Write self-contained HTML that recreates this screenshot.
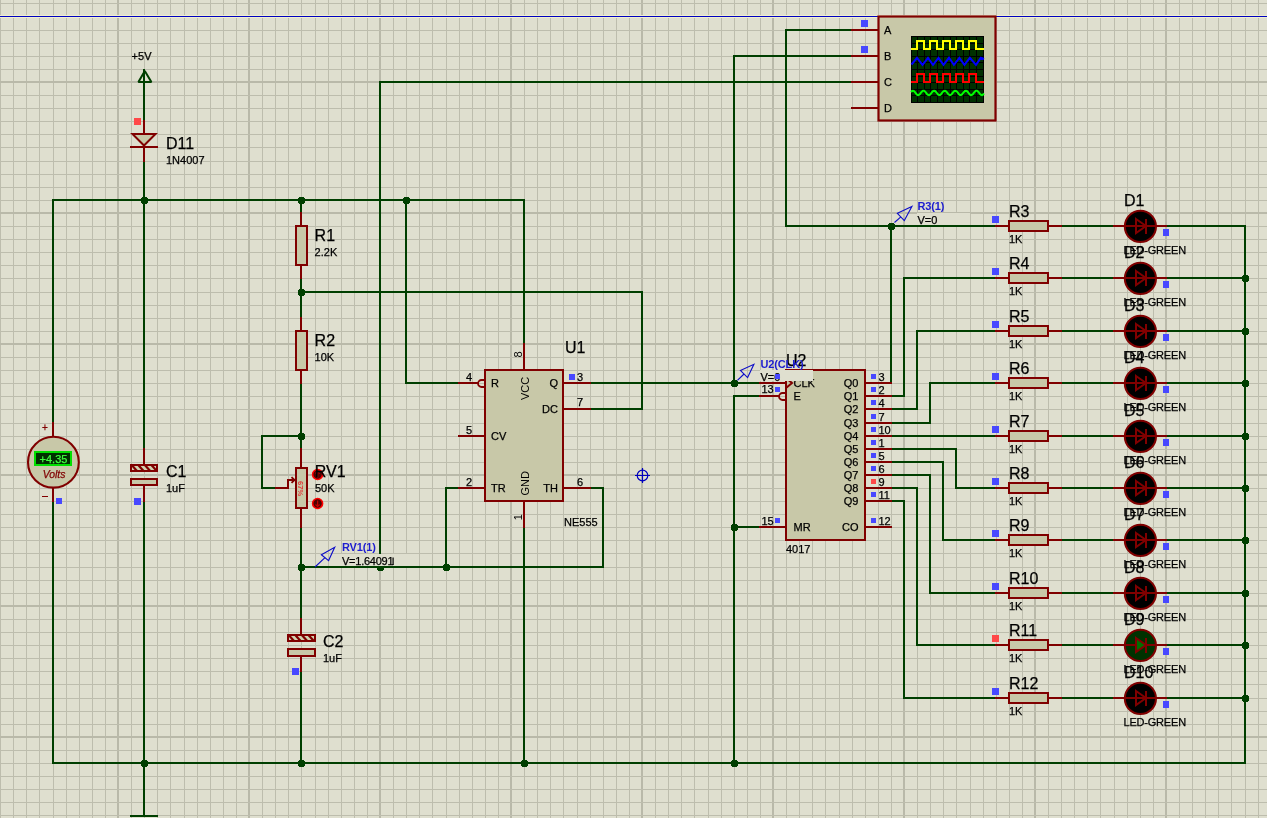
<!DOCTYPE html><html><head><meta charset="utf-8"><style>html,body{margin:0;padding:0;overflow:hidden;background:#dfdfcf}svg{display:block;will-change:transform;font-family:"Liberation Sans",sans-serif}</style></head><body><svg width="1267" height="818" viewBox="0 0 1267 818" font-family="Liberation Sans, sans-serif"><rect width="1267" height="818" fill="#dfdfcf"/><g shape-rendering="crispEdges"><rect x="0" y="0" width="1" height="818" fill="#bdbdad"/><rect x="13" y="0" width="1" height="818" fill="#bdbdad"/><rect x="26" y="0" width="1" height="818" fill="#bdbdad"/><rect x="39" y="0" width="1" height="818" fill="#bdbdad"/><rect x="53" y="0" width="1" height="818" fill="#bdbdad"/><rect x="66" y="0" width="1" height="818" fill="#bdbdad"/><rect x="79" y="0" width="1" height="818" fill="#bdbdad"/><rect x="92" y="0" width="1" height="818" fill="#bdbdad"/><rect x="105" y="0" width="1" height="818" fill="#bdbdad"/><rect x="117" y="0" width="2" height="818" fill="#b9b9a9"/><rect x="131" y="0" width="1" height="818" fill="#bdbdad"/><rect x="144" y="0" width="1" height="818" fill="#bdbdad"/><rect x="157" y="0" width="1" height="818" fill="#bdbdad"/><rect x="170" y="0" width="1" height="818" fill="#bdbdad"/><rect x="184" y="0" width="1" height="818" fill="#bdbdad"/><rect x="197" y="0" width="1" height="818" fill="#bdbdad"/><rect x="210" y="0" width="1" height="818" fill="#bdbdad"/><rect x="223" y="0" width="1" height="818" fill="#bdbdad"/><rect x="236" y="0" width="1" height="818" fill="#bdbdad"/><rect x="248" y="0" width="2" height="818" fill="#b9b9a9"/><rect x="262" y="0" width="1" height="818" fill="#bdbdad"/><rect x="275" y="0" width="1" height="818" fill="#bdbdad"/><rect x="288" y="0" width="1" height="818" fill="#bdbdad"/><rect x="301" y="0" width="1" height="818" fill="#bdbdad"/><rect x="315" y="0" width="1" height="818" fill="#bdbdad"/><rect x="328" y="0" width="1" height="818" fill="#bdbdad"/><rect x="341" y="0" width="1" height="818" fill="#bdbdad"/><rect x="354" y="0" width="1" height="818" fill="#bdbdad"/><rect x="367" y="0" width="1" height="818" fill="#bdbdad"/><rect x="379" y="0" width="2" height="818" fill="#b9b9a9"/><rect x="393" y="0" width="1" height="818" fill="#bdbdad"/><rect x="406" y="0" width="1" height="818" fill="#bdbdad"/><rect x="419" y="0" width="1" height="818" fill="#bdbdad"/><rect x="432" y="0" width="1" height="818" fill="#bdbdad"/><rect x="446" y="0" width="1" height="818" fill="#bdbdad"/><rect x="459" y="0" width="1" height="818" fill="#bdbdad"/><rect x="472" y="0" width="1" height="818" fill="#bdbdad"/><rect x="485" y="0" width="1" height="818" fill="#bdbdad"/><rect x="498" y="0" width="1" height="818" fill="#bdbdad"/><rect x="510" y="0" width="2" height="818" fill="#b9b9a9"/><rect x="524" y="0" width="1" height="818" fill="#bdbdad"/><rect x="537" y="0" width="1" height="818" fill="#bdbdad"/><rect x="550" y="0" width="1" height="818" fill="#bdbdad"/><rect x="563" y="0" width="1" height="818" fill="#bdbdad"/><rect x="577" y="0" width="1" height="818" fill="#bdbdad"/><rect x="590" y="0" width="1" height="818" fill="#bdbdad"/><rect x="603" y="0" width="1" height="818" fill="#bdbdad"/><rect x="616" y="0" width="1" height="818" fill="#bdbdad"/><rect x="629" y="0" width="1" height="818" fill="#bdbdad"/><rect x="641" y="0" width="2" height="818" fill="#b9b9a9"/><rect x="655" y="0" width="1" height="818" fill="#bdbdad"/><rect x="668" y="0" width="1" height="818" fill="#bdbdad"/><rect x="681" y="0" width="1" height="818" fill="#bdbdad"/><rect x="694" y="0" width="1" height="818" fill="#bdbdad"/><rect x="708" y="0" width="1" height="818" fill="#bdbdad"/><rect x="721" y="0" width="1" height="818" fill="#bdbdad"/><rect x="734" y="0" width="1" height="818" fill="#bdbdad"/><rect x="747" y="0" width="1" height="818" fill="#bdbdad"/><rect x="760" y="0" width="1" height="818" fill="#bdbdad"/><rect x="772" y="0" width="2" height="818" fill="#b9b9a9"/><rect x="786" y="0" width="1" height="818" fill="#bdbdad"/><rect x="799" y="0" width="1" height="818" fill="#bdbdad"/><rect x="812" y="0" width="1" height="818" fill="#bdbdad"/><rect x="825" y="0" width="1" height="818" fill="#bdbdad"/><rect x="839" y="0" width="1" height="818" fill="#bdbdad"/><rect x="852" y="0" width="1" height="818" fill="#bdbdad"/><rect x="865" y="0" width="1" height="818" fill="#bdbdad"/><rect x="878" y="0" width="1" height="818" fill="#bdbdad"/><rect x="891" y="0" width="1" height="818" fill="#bdbdad"/><rect x="903" y="0" width="2" height="818" fill="#b9b9a9"/><rect x="917" y="0" width="1" height="818" fill="#bdbdad"/><rect x="930" y="0" width="1" height="818" fill="#bdbdad"/><rect x="943" y="0" width="1" height="818" fill="#bdbdad"/><rect x="956" y="0" width="1" height="818" fill="#bdbdad"/><rect x="970" y="0" width="1" height="818" fill="#bdbdad"/><rect x="983" y="0" width="1" height="818" fill="#bdbdad"/><rect x="996" y="0" width="1" height="818" fill="#bdbdad"/><rect x="1009" y="0" width="1" height="818" fill="#bdbdad"/><rect x="1022" y="0" width="1" height="818" fill="#bdbdad"/><rect x="1034" y="0" width="2" height="818" fill="#b9b9a9"/><rect x="1048" y="0" width="1" height="818" fill="#bdbdad"/><rect x="1061" y="0" width="1" height="818" fill="#bdbdad"/><rect x="1074" y="0" width="1" height="818" fill="#bdbdad"/><rect x="1087" y="0" width="1" height="818" fill="#bdbdad"/><rect x="1100" y="0" width="1" height="818" fill="#bdbdad"/><rect x="1114" y="0" width="1" height="818" fill="#bdbdad"/><rect x="1127" y="0" width="1" height="818" fill="#bdbdad"/><rect x="1140" y="0" width="1" height="818" fill="#bdbdad"/><rect x="1153" y="0" width="1" height="818" fill="#bdbdad"/><rect x="1165" y="0" width="2" height="818" fill="#b9b9a9"/><rect x="1179" y="0" width="1" height="818" fill="#bdbdad"/><rect x="1192" y="0" width="1" height="818" fill="#bdbdad"/><rect x="1205" y="0" width="1" height="818" fill="#bdbdad"/><rect x="1218" y="0" width="1" height="818" fill="#bdbdad"/><rect x="1231" y="0" width="1" height="818" fill="#bdbdad"/><rect x="1245" y="0" width="1" height="818" fill="#bdbdad"/><rect x="1258" y="0" width="1" height="818" fill="#bdbdad"/><rect x="0" y="3" width="1267" height="1" fill="#bdbdad"/><rect x="0" y="16" width="1267" height="1" fill="#bdbdad"/><rect x="0" y="30" width="1267" height="1" fill="#bdbdad"/><rect x="0" y="43" width="1267" height="1" fill="#bdbdad"/><rect x="0" y="56" width="1267" height="1" fill="#bdbdad"/><rect x="0" y="69" width="1267" height="1" fill="#bdbdad"/><rect x="0" y="81" width="1267" height="2" fill="#b9b9a9"/><rect x="0" y="95" width="1267" height="1" fill="#bdbdad"/><rect x="0" y="108" width="1267" height="1" fill="#bdbdad"/><rect x="0" y="121" width="1267" height="1" fill="#bdbdad"/><rect x="0" y="134" width="1267" height="1" fill="#bdbdad"/><rect x="0" y="147" width="1267" height="1" fill="#bdbdad"/><rect x="0" y="161" width="1267" height="1" fill="#bdbdad"/><rect x="0" y="174" width="1267" height="1" fill="#bdbdad"/><rect x="0" y="187" width="1267" height="1" fill="#bdbdad"/><rect x="0" y="200" width="1267" height="1" fill="#bdbdad"/><rect x="0" y="212" width="1267" height="2" fill="#b9b9a9"/><rect x="0" y="226" width="1267" height="1" fill="#bdbdad"/><rect x="0" y="239" width="1267" height="1" fill="#bdbdad"/><rect x="0" y="252" width="1267" height="1" fill="#bdbdad"/><rect x="0" y="265" width="1267" height="1" fill="#bdbdad"/><rect x="0" y="278" width="1267" height="1" fill="#bdbdad"/><rect x="0" y="292" width="1267" height="1" fill="#bdbdad"/><rect x="0" y="305" width="1267" height="1" fill="#bdbdad"/><rect x="0" y="318" width="1267" height="1" fill="#bdbdad"/><rect x="0" y="331" width="1267" height="1" fill="#bdbdad"/><rect x="0" y="343" width="1267" height="2" fill="#b9b9a9"/><rect x="0" y="357" width="1267" height="1" fill="#bdbdad"/><rect x="0" y="370" width="1267" height="1" fill="#bdbdad"/><rect x="0" y="383" width="1267" height="1" fill="#bdbdad"/><rect x="0" y="396" width="1267" height="1" fill="#bdbdad"/><rect x="0" y="409" width="1267" height="1" fill="#bdbdad"/><rect x="0" y="423" width="1267" height="1" fill="#bdbdad"/><rect x="0" y="436" width="1267" height="1" fill="#bdbdad"/><rect x="0" y="449" width="1267" height="1" fill="#bdbdad"/><rect x="0" y="462" width="1267" height="1" fill="#bdbdad"/><rect x="0" y="474" width="1267" height="2" fill="#b9b9a9"/><rect x="0" y="488" width="1267" height="1" fill="#bdbdad"/><rect x="0" y="501" width="1267" height="1" fill="#bdbdad"/><rect x="0" y="514" width="1267" height="1" fill="#bdbdad"/><rect x="0" y="527" width="1267" height="1" fill="#bdbdad"/><rect x="0" y="540" width="1267" height="1" fill="#bdbdad"/><rect x="0" y="553" width="1267" height="1" fill="#bdbdad"/><rect x="0" y="567" width="1267" height="1" fill="#bdbdad"/><rect x="0" y="580" width="1267" height="1" fill="#bdbdad"/><rect x="0" y="593" width="1267" height="1" fill="#bdbdad"/><rect x="0" y="605" width="1267" height="2" fill="#b9b9a9"/><rect x="0" y="619" width="1267" height="1" fill="#bdbdad"/><rect x="0" y="632" width="1267" height="1" fill="#bdbdad"/><rect x="0" y="645" width="1267" height="1" fill="#bdbdad"/><rect x="0" y="658" width="1267" height="1" fill="#bdbdad"/><rect x="0" y="671" width="1267" height="1" fill="#bdbdad"/><rect x="0" y="684" width="1267" height="1" fill="#bdbdad"/><rect x="0" y="698" width="1267" height="1" fill="#bdbdad"/><rect x="0" y="711" width="1267" height="1" fill="#bdbdad"/><rect x="0" y="724" width="1267" height="1" fill="#bdbdad"/><rect x="0" y="736" width="1267" height="2" fill="#b9b9a9"/><rect x="0" y="750" width="1267" height="1" fill="#bdbdad"/><rect x="0" y="763" width="1267" height="1" fill="#bdbdad"/><rect x="0" y="776" width="1267" height="1" fill="#bdbdad"/><rect x="0" y="789" width="1267" height="1" fill="#bdbdad"/><rect x="0" y="802" width="1267" height="1" fill="#bdbdad"/><rect x="0" y="815" width="1267" height="1" fill="#bdbdad"/></g><rect x="0" y="15" width="1267" height="1" fill="#efefcf"/><rect x="0" y="17" width="1267" height="1" fill="#efefcf"/><rect x="0" y="16" width="1267" height="1" fill="#0000c0"/><g shape-rendering="crispEdges"><rect x="52" y="199" width="473" height="2" fill="#003f00"/><rect x="523" y="199" width="2" height="146" fill="#003f00"/><rect x="52" y="199" width="2" height="225" fill="#003f00"/><rect x="52" y="500" width="2" height="264" fill="#003f00"/><rect x="52" y="762" width="1194" height="2" fill="#003f00"/><rect x="143" y="69" width="2" height="53" fill="#003f00"/><rect x="143" y="160" width="2" height="290" fill="#003f00"/><rect x="143" y="500" width="2" height="317" fill="#003f00"/><rect x="130" y="815" width="28" height="2" fill="#003f00"/><rect x="300" y="199" width="2" height="15" fill="#003f00"/><rect x="300" y="277" width="2" height="42" fill="#003f00"/><rect x="300" y="382" width="2" height="68" fill="#003f00"/><rect x="300" y="526" width="2" height="94" fill="#003f00"/><rect x="300" y="670" width="2" height="94" fill="#003f00"/><rect x="261" y="435" width="41" height="2" fill="#003f00"/><rect x="261" y="435" width="2" height="54" fill="#003f00"/><rect x="261" y="487" width="15" height="2" fill="#003f00"/><rect x="300" y="291" width="343" height="2" fill="#003f00"/><rect x="641" y="291" width="2" height="119" fill="#003f00"/><rect x="589" y="408" width="54" height="2" fill="#003f00"/><rect x="405" y="199" width="2" height="185" fill="#003f00"/><rect x="405" y="382" width="55" height="2" fill="#003f00"/><rect x="379" y="81" width="474" height="2" fill="#003f00"/><rect x="379" y="81" width="2" height="487" fill="#003f00"/><rect x="300" y="566" width="304" height="2" fill="#003f00"/><rect x="602" y="487" width="2" height="81" fill="#003f00"/><rect x="589" y="487" width="15" height="2" fill="#003f00"/><rect x="445" y="487" width="2" height="81" fill="#003f00"/><rect x="445" y="487" width="15" height="2" fill="#003f00"/><rect x="523" y="526" width="2" height="238" fill="#003f00"/><rect x="589" y="382" width="172" height="2" fill="#003f00"/><rect x="733" y="55" width="120" height="2" fill="#003f00"/><rect x="733" y="55" width="2" height="329" fill="#003f00"/><rect x="733" y="395" width="28" height="2" fill="#003f00"/><rect x="733" y="395" width="2" height="369" fill="#003f00"/><rect x="733" y="526" width="28" height="2" fill="#003f00"/><rect x="785" y="29" width="68" height="2" fill="#003f00"/><rect x="785" y="29" width="2" height="198" fill="#003f00"/><rect x="785" y="225" width="212" height="2" fill="#003f00"/><rect x="890" y="225" width="2" height="159" fill="#003f00"/><rect x="890" y="395" width="15" height="2" fill="#003f00"/><rect x="903" y="277" width="2" height="120" fill="#003f00"/><rect x="903" y="277" width="94" height="2" fill="#003f00"/><rect x="890" y="408" width="28" height="2" fill="#003f00"/><rect x="916" y="330" width="2" height="80" fill="#003f00"/><rect x="916" y="330" width="81" height="2" fill="#003f00"/><rect x="890" y="422" width="41" height="2" fill="#003f00"/><rect x="929" y="382" width="2" height="42" fill="#003f00"/><rect x="929" y="382" width="68" height="2" fill="#003f00"/><rect x="890" y="435" width="107" height="2" fill="#003f00"/><rect x="890" y="448" width="67" height="2" fill="#003f00"/><rect x="955" y="448" width="2" height="41" fill="#003f00"/><rect x="955" y="487" width="42" height="2" fill="#003f00"/><rect x="890" y="461" width="54" height="2" fill="#003f00"/><rect x="942" y="461" width="2" height="80" fill="#003f00"/><rect x="942" y="539" width="55" height="2" fill="#003f00"/><rect x="890" y="474" width="41" height="2" fill="#003f00"/><rect x="929" y="474" width="2" height="120" fill="#003f00"/><rect x="929" y="592" width="68" height="2" fill="#003f00"/><rect x="890" y="487" width="28" height="2" fill="#003f00"/><rect x="916" y="487" width="2" height="159" fill="#003f00"/><rect x="916" y="644" width="81" height="2" fill="#003f00"/><rect x="890" y="500" width="15" height="2" fill="#003f00"/><rect x="903" y="500" width="2" height="199" fill="#003f00"/><rect x="903" y="697" width="94" height="2" fill="#003f00"/><rect x="1060" y="225" width="55" height="2" fill="#003f00"/><rect x="1165" y="225" width="81" height="2" fill="#003f00"/><rect x="1060" y="277" width="55" height="2" fill="#003f00"/><rect x="1165" y="277" width="81" height="2" fill="#003f00"/><rect x="1060" y="330" width="55" height="2" fill="#003f00"/><rect x="1165" y="330" width="81" height="2" fill="#003f00"/><rect x="1060" y="382" width="55" height="2" fill="#003f00"/><rect x="1165" y="382" width="81" height="2" fill="#003f00"/><rect x="1060" y="435" width="55" height="2" fill="#003f00"/><rect x="1165" y="435" width="81" height="2" fill="#003f00"/><rect x="1060" y="487" width="55" height="2" fill="#003f00"/><rect x="1165" y="487" width="81" height="2" fill="#003f00"/><rect x="1060" y="539" width="55" height="2" fill="#003f00"/><rect x="1165" y="539" width="81" height="2" fill="#003f00"/><rect x="1060" y="592" width="55" height="2" fill="#003f00"/><rect x="1165" y="592" width="81" height="2" fill="#003f00"/><rect x="1060" y="644" width="55" height="2" fill="#003f00"/><rect x="1165" y="644" width="81" height="2" fill="#003f00"/><rect x="1060" y="697" width="55" height="2" fill="#003f00"/><rect x="1165" y="697" width="81" height="2" fill="#003f00"/><rect x="1244" y="225" width="2" height="539" fill="#003f00"/></g><g shape-rendering="crispEdges"><path d="M142,197h5v1h1v5h-1v1h-5v-1h-1v-5h1z" fill="#003f00"/><path d="M299,197h5v1h1v5h-1v1h-5v-1h-1v-5h1z" fill="#003f00"/><path d="M404,197h5v1h1v5h-1v1h-5v-1h-1v-5h1z" fill="#003f00"/><path d="M299,289h5v1h1v5h-1v1h-5v-1h-1v-5h1z" fill="#003f00"/><path d="M299,433h5v1h1v5h-1v1h-5v-1h-1v-5h1z" fill="#003f00"/><path d="M299,564h5v1h1v5h-1v1h-5v-1h-1v-5h1z" fill="#003f00"/><path d="M444,564h5v1h1v5h-1v1h-5v-1h-1v-5h1z" fill="#003f00"/><path d="M378,564h5v1h1v5h-1v1h-5v-1h-1v-5h1z" fill="#003f00"/><path d="M142,760h5v1h1v5h-1v1h-5v-1h-1v-5h1z" fill="#003f00"/><path d="M299,760h5v1h1v5h-1v1h-5v-1h-1v-5h1z" fill="#003f00"/><path d="M522,760h5v1h1v5h-1v1h-5v-1h-1v-5h1z" fill="#003f00"/><path d="M732,760h5v1h1v5h-1v1h-5v-1h-1v-5h1z" fill="#003f00"/><path d="M732,380h5v1h1v5h-1v1h-5v-1h-1v-5h1z" fill="#003f00"/><path d="M732,524h5v1h1v5h-1v1h-5v-1h-1v-5h1z" fill="#003f00"/><path d="M889,223h5v1h1v5h-1v1h-5v-1h-1v-5h1z" fill="#003f00"/><path d="M1243,275h5v1h1v5h-1v1h-5v-1h-1v-5h1z" fill="#003f00"/><path d="M1243,328h5v1h1v5h-1v1h-5v-1h-1v-5h1z" fill="#003f00"/><path d="M1243,380h5v1h1v5h-1v1h-5v-1h-1v-5h1z" fill="#003f00"/><path d="M1243,433h5v1h1v5h-1v1h-5v-1h-1v-5h1z" fill="#003f00"/><path d="M1243,485h5v1h1v5h-1v1h-5v-1h-1v-5h1z" fill="#003f00"/><path d="M1243,537h5v1h1v5h-1v1h-5v-1h-1v-5h1z" fill="#003f00"/><path d="M1243,590h5v1h1v5h-1v1h-5v-1h-1v-5h1z" fill="#003f00"/><path d="M1243,642h5v1h1v5h-1v1h-5v-1h-1v-5h1z" fill="#003f00"/><path d="M1243,695h5v1h1v5h-1v1h-5v-1h-1v-5h1z" fill="#003f00"/></g><g><path d="M144.8,71 L151.4,82 L138.4,82 Z" fill="none" stroke="#003f00" stroke-width="2" stroke-linejoin="bevel"/><text x="131.6" y="60" font-size="11" fill="#000000" stroke="#000000" stroke-width="0.25" text-anchor="start" >+5V</text><rect x="143" y="120" width="2" height="15" fill="#800000"/><path d="M132.5,134 L155.5,134 L144,145.5 Z" fill="#c8c8a8" stroke="#800000" stroke-width="2" stroke-linejoin="miter"/><rect x="130" y="146" width="28" height="2" fill="#800000"/><rect x="143" y="146" width="2" height="16" fill="#800000"/><rect x="134" y="118" width="7" height="7" fill="#ff4848" shape-rendering="crispEdges"/><text x="166" y="149" font-size="16" fill="#000000" stroke="#000000" stroke-width="0.25" text-anchor="start" >D11</text><text x="166" y="164" font-size="11" fill="#000000" stroke="#000000" stroke-width="0.25" text-anchor="start" >1N4007</text><rect x="52" y="422" width="2" height="15" fill="#800000"/><rect x="52" y="488" width="2" height="14" fill="#800000"/><circle cx="53.4" cy="462.2" r="25.4" fill="#c8c8a8" stroke="#800000" stroke-width="2.1"/><rect x="35" y="452" width="36" height="13" fill="#003000" stroke="#00e000" stroke-width="2"/><text x="53.5" y="462.5" font-size="11" fill="#40ff40" stroke="#40ff40" stroke-width="0.25" text-anchor="middle" >+4.35</text><text x="54" y="478.3" font-size="10.4" fill="#800000" stroke="#800000" stroke-width="0.25" text-anchor="middle" font-style="italic">Volts</text><text x="42" y="430.5" font-size="10" fill="#800000" stroke="#800000" stroke-width="0.25" text-anchor="start" >+</text><rect x="42" y="496" width="6" height="1" fill="#800000"/><rect x="56" y="498" width="6" height="6" fill="#4848ff" shape-rendering="crispEdges"/><rect x="130" y="464" width="28" height="8" fill="#800000"/><clipPath id="capclip1"><rect x="132" y="466" width="24" height="4"/></clipPath><g clip-path="url(#capclip1)"><path d="M127.4,466 L131.0,466 L134.6,470 L131.0,470 Z" fill="#d2d2b2"/><path d="M134.0,466 L137.6,466 L141.2,470 L137.6,470 Z" fill="#d2d2b2"/><path d="M140.6,466 L144.2,466 L147.8,470 L144.2,470 Z" fill="#d2d2b2"/><path d="M147.2,466 L150.8,466 L154.4,470 L150.8,470 Z" fill="#d2d2b2"/><path d="M153.8,466 L157.4,466 L161.0,470 L157.4,470 Z" fill="#d2d2b2"/></g><rect x="131" y="479" width="26" height="6" fill="#c8c8a8" stroke="#800000" stroke-width="2"/><rect x="143" y="448" width="2" height="17" fill="#800000"/><rect x="143" y="485" width="2" height="17" fill="#800000"/><rect x="134" y="498" width="7" height="7" fill="#4848ff" shape-rendering="crispEdges"/><text x="166" y="477" font-size="16" fill="#000000" stroke="#000000" stroke-width="0.25" text-anchor="start" >C1</text><text x="166" y="492" font-size="11" fill="#000000" stroke="#000000" stroke-width="0.25" text-anchor="start" >1uF</text><rect x="287" y="634" width="29" height="8" fill="#800000"/><clipPath id="capclip2"><rect x="289" y="636" width="25" height="4"/></clipPath><g clip-path="url(#capclip2)"><path d="M284.4,636 L288.0,636 L291.6,640 L288.0,640 Z" fill="#d2d2b2"/><path d="M291.0,636 L294.6,636 L298.2,640 L294.6,640 Z" fill="#d2d2b2"/><path d="M297.6,636 L301.2,636 L304.8,640 L301.2,640 Z" fill="#d2d2b2"/><path d="M304.2,636 L307.8,636 L311.4,640 L307.8,640 Z" fill="#d2d2b2"/><path d="M310.8,636 L314.4,636 L318.0,640 L314.4,640 Z" fill="#d2d2b2"/></g><rect x="288" y="649" width="27" height="7" fill="#c8c8a8" stroke="#800000" stroke-width="2"/><rect x="300" y="618" width="2" height="17" fill="#800000"/><rect x="300" y="655" width="2" height="17" fill="#800000"/><rect x="292" y="668" width="7" height="7" fill="#4848ff" shape-rendering="crispEdges"/><text x="323" y="647" font-size="16" fill="#000000" stroke="#000000" stroke-width="0.25" text-anchor="start" >C2</text><text x="323" y="662" font-size="11" fill="#000000" stroke="#000000" stroke-width="0.25" text-anchor="start" >1uF</text><rect x="300" y="212" width="2" height="15" fill="#800000"/><rect x="296" y="226" width="11" height="39" fill="#c8c8a8" stroke="#800000" stroke-width="2"/><rect x="300" y="264" width="2" height="15" fill="#800000"/><text x="314.6" y="240.9" font-size="16" fill="#000000" stroke="#000000" stroke-width="0.25" text-anchor="start" >R1</text><text x="314.6" y="256" font-size="11" fill="#000000" stroke="#000000" stroke-width="0.25" text-anchor="start" >2.2K</text><rect x="300" y="317" width="2" height="15" fill="#800000"/><rect x="296" y="331" width="11" height="39" fill="#c8c8a8" stroke="#800000" stroke-width="2"/><rect x="300" y="369" width="2" height="15" fill="#800000"/><text x="314.6" y="345.9" font-size="16" fill="#000000" stroke="#000000" stroke-width="0.25" text-anchor="start" >R2</text><text x="314.6" y="361" font-size="11" fill="#000000" stroke="#000000" stroke-width="0.25" text-anchor="start" >10K</text><rect x="300" y="448" width="2" height="21" fill="#800000"/><rect x="296" y="468" width="11" height="40" fill="#c8c8a8" stroke="#800000" stroke-width="2"/><rect x="300" y="507" width="2" height="21" fill="#800000"/><path d="M275,488 L288,488 L288,480 L295,480" fill="none" stroke="#800000" stroke-width="2"/><path d="M291.5,477.2 L294.6,480 L291.5,482.8" fill="none" stroke="#800000" stroke-width="1.8"/><text transform="translate(298.3,481) rotate(90)" font-size="7.6" font-weight="bold" fill="#e03838">67%</text><circle cx="317.6" cy="474.5" r="5" fill="#500000" stroke="#ff0000" stroke-width="1.6"/><path d="M317.6,471.5 L317.6,477.5 M315.5,473.5 L317.6,471.5 L319.7,473.5" stroke="#c00000" stroke-width="1.2" fill="none"/><circle cx="317.6" cy="503.5" r="5" fill="#500000" stroke="#ff0000" stroke-width="1.6"/><path d="M317.6,500.5 L317.6,506.5 M315.5,504.5 L317.6,506.5 L319.7,504.5" stroke="#c00000" stroke-width="1.2" fill="none"/><text x="314.8" y="477" font-size="16" fill="#000000" stroke="#000000" stroke-width="0.25" text-anchor="start" >RV1</text><text x="315" y="492" font-size="11" fill="#000000" stroke="#000000" stroke-width="0.25" text-anchor="start" >50K</text><rect x="485" y="370" width="78" height="131" fill="#c8c8a8" stroke="#800000" stroke-width="2"/><rect x="523" y="343" width="2" height="28" fill="#800000"/><rect x="523" y="500" width="2" height="28" fill="#800000"/><rect x="458" y="382" width="21" height="2" fill="#800000"/><path d="M485,380 L481.5,380 A3.5,3.5 0 0 0 481.5,387 L485,387" fill="none" stroke="#800000" stroke-width="1.8"/><rect x="458" y="435" width="28" height="2" fill="#800000"/><rect x="458" y="487" width="28" height="2" fill="#800000"/><rect x="562" y="382" width="29" height="2" fill="#800000"/><rect x="562" y="408" width="29" height="2" fill="#800000"/><rect x="562" y="487" width="29" height="2" fill="#800000"/><text x="466" y="381" font-size="11" fill="#000000" stroke="#000000" stroke-width="0.25" text-anchor="start" >4</text><text x="466" y="434" font-size="11" fill="#000000" stroke="#000000" stroke-width="0.25" text-anchor="start" >5</text><text x="466" y="486" font-size="11" fill="#000000" stroke="#000000" stroke-width="0.25" text-anchor="start" >2</text><text x="577" y="381" font-size="11" fill="#000000" stroke="#000000" stroke-width="0.25" text-anchor="start" >3</text><text x="577" y="406" font-size="11" fill="#000000" stroke="#000000" stroke-width="0.25" text-anchor="start" >7</text><text x="577" y="486" font-size="11" fill="#000000" stroke="#000000" stroke-width="0.25" text-anchor="start" >6</text><text transform="translate(522,357.6) rotate(-90)" font-size="11" fill="#000000">8</text><text transform="translate(522,520.3) rotate(-90)" font-size="11" fill="#000000">1</text><text x="491" y="387" font-size="11" fill="#000000" stroke="#000000" stroke-width="0.25" text-anchor="start" >R</text><text x="491" y="440" font-size="11" fill="#000000" stroke="#000000" stroke-width="0.25" text-anchor="start" >CV</text><text x="491" y="492" font-size="11" fill="#000000" stroke="#000000" stroke-width="0.25" text-anchor="start" >TR</text><text x="558" y="387" font-size="11" fill="#000000" stroke="#000000" stroke-width="0.25" text-anchor="end" >Q</text><text x="558" y="413" font-size="11" fill="#000000" stroke="#000000" stroke-width="0.25" text-anchor="end" >DC</text><text x="558" y="492" font-size="11" fill="#000000" stroke="#000000" stroke-width="0.25" text-anchor="end" >TH</text><text transform="translate(529,400) rotate(-90)" font-size="11" fill="#000000">VCC</text><text transform="translate(529,495.5) rotate(-90)" font-size="11" fill="#000000">GND</text><rect x="569" y="374" width="6" height="6" fill="#4848ff" shape-rendering="crispEdges"/><text x="565" y="353" font-size="16" fill="#000000" stroke="#000000" stroke-width="0.25" text-anchor="start" >U1</text><text x="564" y="526" font-size="11" fill="#000000" stroke="#000000" stroke-width="0.25" text-anchor="start" >NE555</text><g stroke="#0000c0" stroke-width="1.2" fill="none"><circle cx="642.5" cy="475.5" r="5.3"/><path d="M635,475.5 H650 M642.5,468 V483"/></g><rect x="786" y="370" width="79" height="170" fill="#c8c8a8" stroke="#800000" stroke-width="2"/><rect x="759" y="382" width="28" height="2" fill="#800000"/><path d="M786,378 L792,383 L786,388" fill="none" stroke="#800000" stroke-width="2"/><rect x="759" y="395" width="21" height="2" fill="#800000"/><path d="M786,393 L782.5,393 A3.5,3.5 0 0 0 782.5,400 L786,400" fill="none" stroke="#800000" stroke-width="1.8"/><rect x="759" y="526" width="28" height="2" fill="#800000"/><text x="793.5" y="387.3" font-size="11" fill="#000000" stroke="#000000" stroke-width="0.25" text-anchor="start" >CLK</text><text x="793.5" y="399.7" font-size="11" fill="#000000" stroke="#000000" stroke-width="0.25" text-anchor="start" >E</text><text x="793.5" y="531" font-size="11" fill="#000000" stroke="#000000" stroke-width="0.25" text-anchor="start" >MR</text><rect x="864" y="382" width="28" height="2" fill="#800000"/><text x="858.5" y="386.8" font-size="11" fill="#000000" stroke="#000000" stroke-width="0.25" text-anchor="end" >Q0</text><text x="878.5" y="380.8" font-size="11" fill="#000000" stroke="#000000" stroke-width="0.25" text-anchor="start" >3</text><rect x="871" y="374" width="5" height="5" fill="#4848ff" shape-rendering="crispEdges"/><rect x="864" y="395" width="28" height="2" fill="#800000"/><text x="858.5" y="399.8" font-size="11" fill="#000000" stroke="#000000" stroke-width="0.25" text-anchor="end" >Q1</text><text x="878.5" y="393.8" font-size="11" fill="#000000" stroke="#000000" stroke-width="0.25" text-anchor="start" >2</text><rect x="871" y="387" width="5" height="5" fill="#4848ff" shape-rendering="crispEdges"/><rect x="864" y="408" width="28" height="2" fill="#800000"/><text x="858.5" y="412.8" font-size="11" fill="#000000" stroke="#000000" stroke-width="0.25" text-anchor="end" >Q2</text><text x="878.5" y="406.8" font-size="11" fill="#000000" stroke="#000000" stroke-width="0.25" text-anchor="start" >4</text><rect x="871" y="400" width="5" height="5" fill="#4848ff" shape-rendering="crispEdges"/><rect x="864" y="422" width="28" height="2" fill="#800000"/><text x="858.5" y="426.8" font-size="11" fill="#000000" stroke="#000000" stroke-width="0.25" text-anchor="end" >Q3</text><text x="878.5" y="420.8" font-size="11" fill="#000000" stroke="#000000" stroke-width="0.25" text-anchor="start" >7</text><rect x="871" y="414" width="5" height="5" fill="#4848ff" shape-rendering="crispEdges"/><rect x="864" y="435" width="28" height="2" fill="#800000"/><text x="858.5" y="439.8" font-size="11" fill="#000000" stroke="#000000" stroke-width="0.25" text-anchor="end" >Q4</text><text x="878.5" y="433.8" font-size="11" fill="#000000" stroke="#000000" stroke-width="0.25" text-anchor="start" >10</text><rect x="871" y="427" width="5" height="5" fill="#4848ff" shape-rendering="crispEdges"/><rect x="864" y="448" width="28" height="2" fill="#800000"/><text x="858.5" y="452.8" font-size="11" fill="#000000" stroke="#000000" stroke-width="0.25" text-anchor="end" >Q5</text><text x="878.5" y="446.8" font-size="11" fill="#000000" stroke="#000000" stroke-width="0.25" text-anchor="start" >1</text><rect x="871" y="440" width="5" height="5" fill="#4848ff" shape-rendering="crispEdges"/><rect x="864" y="461" width="28" height="2" fill="#800000"/><text x="858.5" y="465.8" font-size="11" fill="#000000" stroke="#000000" stroke-width="0.25" text-anchor="end" >Q6</text><text x="878.5" y="459.8" font-size="11" fill="#000000" stroke="#000000" stroke-width="0.25" text-anchor="start" >5</text><rect x="871" y="453" width="5" height="5" fill="#4848ff" shape-rendering="crispEdges"/><rect x="864" y="474" width="28" height="2" fill="#800000"/><text x="858.5" y="478.8" font-size="11" fill="#000000" stroke="#000000" stroke-width="0.25" text-anchor="end" >Q7</text><text x="878.5" y="472.8" font-size="11" fill="#000000" stroke="#000000" stroke-width="0.25" text-anchor="start" >6</text><rect x="871" y="466" width="5" height="5" fill="#4848ff" shape-rendering="crispEdges"/><rect x="864" y="487" width="28" height="2" fill="#800000"/><text x="858.5" y="491.8" font-size="11" fill="#000000" stroke="#000000" stroke-width="0.25" text-anchor="end" >Q8</text><text x="878.5" y="485.8" font-size="11" fill="#000000" stroke="#000000" stroke-width="0.25" text-anchor="start" >9</text><rect x="871" y="479" width="5" height="5" fill="#ff4848" shape-rendering="crispEdges"/><rect x="864" y="500" width="28" height="2" fill="#800000"/><text x="858.5" y="504.8" font-size="11" fill="#000000" stroke="#000000" stroke-width="0.25" text-anchor="end" >Q9</text><text x="878.5" y="498.8" font-size="11" fill="#000000" stroke="#000000" stroke-width="0.25" text-anchor="start" >11</text><rect x="871" y="492" width="5" height="5" fill="#4848ff" shape-rendering="crispEdges"/><rect x="864" y="526" width="28" height="2" fill="#800000"/><text x="858.5" y="531" font-size="11" fill="#000000" stroke="#000000" stroke-width="0.25" text-anchor="end" >CO</text><text x="878.5" y="524.8" font-size="11" fill="#000000" stroke="#000000" stroke-width="0.25" text-anchor="start" >12</text><rect x="871" y="518" width="5" height="5" fill="#4848ff" shape-rendering="crispEdges"/><text x="761.5" y="393" font-size="11" fill="#000000" stroke="#000000" stroke-width="0.25" text-anchor="start" >13</text><rect x="775" y="387" width="5" height="5" fill="#4848ff" shape-rendering="crispEdges"/><text x="761.5" y="524.5" font-size="11" fill="#000000" stroke="#000000" stroke-width="0.25" text-anchor="start" >15</text><rect x="775" y="518" width="5" height="5" fill="#4848ff" shape-rendering="crispEdges"/><text x="786" y="366" font-size="16" fill="#000000" stroke="#000000" stroke-width="0.25" text-anchor="start" >U2</text><text x="786" y="553" font-size="11" fill="#000000" stroke="#000000" stroke-width="0.25" text-anchor="start" >4017</text><rect x="878.5" y="16.5" width="117" height="104" fill="#c8c8a8" stroke="#800000" stroke-width="2.2"/><rect x="851" y="29" width="28" height="2" fill="#800000"/><text x="884" y="34" font-size="11" fill="#000000" stroke="#000000" stroke-width="0.25" text-anchor="start" >A</text><rect x="851" y="55" width="28" height="2" fill="#800000"/><text x="884" y="60" font-size="11" fill="#000000" stroke="#000000" stroke-width="0.25" text-anchor="start" >B</text><rect x="851" y="81" width="28" height="2" fill="#800000"/><text x="884" y="86" font-size="11" fill="#000000" stroke="#000000" stroke-width="0.25" text-anchor="start" >C</text><rect x="851" y="107" width="28" height="2" fill="#800000"/><text x="884" y="112" font-size="11" fill="#000000" stroke="#000000" stroke-width="0.25" text-anchor="start" >D</text><rect x="861" y="20" width="7" height="7" fill="#4848ff" shape-rendering="crispEdges"/><rect x="861" y="46" width="7" height="7" fill="#4848ff" shape-rendering="crispEdges"/><rect x="911" y="36" width="73" height="67" fill="#000"/><g shape-rendering="crispEdges"><rect x="912" y="37" width="5" height="6" fill="#003000"/><rect x="912" y="44" width="5" height="5" fill="#003000"/><rect x="912" y="50" width="5" height="6" fill="#003000"/><rect x="912" y="57" width="5" height="5" fill="#003000"/><rect x="912" y="63" width="5" height="6" fill="#003000"/><rect x="912" y="70" width="5" height="6" fill="#003000"/><rect x="912" y="77" width="5" height="5" fill="#003000"/><rect x="912" y="83" width="5" height="6" fill="#003000"/><rect x="912" y="90" width="5" height="5" fill="#003000"/><rect x="912" y="96" width="5" height="6" fill="#003000"/><rect x="918" y="37" width="6" height="6" fill="#003000"/><rect x="918" y="44" width="6" height="5" fill="#003000"/><rect x="918" y="50" width="6" height="6" fill="#003000"/><rect x="918" y="57" width="6" height="5" fill="#003000"/><rect x="918" y="63" width="6" height="6" fill="#003000"/><rect x="918" y="70" width="6" height="6" fill="#003000"/><rect x="918" y="77" width="6" height="5" fill="#003000"/><rect x="918" y="83" width="6" height="6" fill="#003000"/><rect x="918" y="90" width="6" height="5" fill="#003000"/><rect x="918" y="96" width="6" height="6" fill="#003000"/><rect x="925" y="37" width="5" height="6" fill="#003000"/><rect x="925" y="44" width="5" height="5" fill="#003000"/><rect x="925" y="50" width="5" height="6" fill="#003000"/><rect x="925" y="57" width="5" height="5" fill="#003000"/><rect x="925" y="63" width="5" height="6" fill="#003000"/><rect x="925" y="70" width="5" height="6" fill="#003000"/><rect x="925" y="77" width="5" height="5" fill="#003000"/><rect x="925" y="83" width="5" height="6" fill="#003000"/><rect x="925" y="90" width="5" height="5" fill="#003000"/><rect x="925" y="96" width="5" height="6" fill="#003000"/><rect x="931" y="37" width="6" height="6" fill="#003000"/><rect x="931" y="44" width="6" height="5" fill="#003000"/><rect x="931" y="50" width="6" height="6" fill="#003000"/><rect x="931" y="57" width="6" height="5" fill="#003000"/><rect x="931" y="63" width="6" height="6" fill="#003000"/><rect x="931" y="70" width="6" height="6" fill="#003000"/><rect x="931" y="77" width="6" height="5" fill="#003000"/><rect x="931" y="83" width="6" height="6" fill="#003000"/><rect x="931" y="90" width="6" height="5" fill="#003000"/><rect x="931" y="96" width="6" height="6" fill="#003000"/><rect x="938" y="37" width="5" height="6" fill="#003000"/><rect x="938" y="44" width="5" height="5" fill="#003000"/><rect x="938" y="50" width="5" height="6" fill="#003000"/><rect x="938" y="57" width="5" height="5" fill="#003000"/><rect x="938" y="63" width="5" height="6" fill="#003000"/><rect x="938" y="70" width="5" height="6" fill="#003000"/><rect x="938" y="77" width="5" height="5" fill="#003000"/><rect x="938" y="83" width="5" height="6" fill="#003000"/><rect x="938" y="90" width="5" height="5" fill="#003000"/><rect x="938" y="96" width="5" height="6" fill="#003000"/><rect x="944" y="37" width="6" height="6" fill="#003000"/><rect x="944" y="44" width="6" height="5" fill="#003000"/><rect x="944" y="50" width="6" height="6" fill="#003000"/><rect x="944" y="57" width="6" height="5" fill="#003000"/><rect x="944" y="63" width="6" height="6" fill="#003000"/><rect x="944" y="70" width="6" height="6" fill="#003000"/><rect x="944" y="77" width="6" height="5" fill="#003000"/><rect x="944" y="83" width="6" height="6" fill="#003000"/><rect x="944" y="90" width="6" height="5" fill="#003000"/><rect x="944" y="96" width="6" height="6" fill="#003000"/><rect x="951" y="37" width="5" height="6" fill="#003000"/><rect x="951" y="44" width="5" height="5" fill="#003000"/><rect x="951" y="50" width="5" height="6" fill="#003000"/><rect x="951" y="57" width="5" height="5" fill="#003000"/><rect x="951" y="63" width="5" height="6" fill="#003000"/><rect x="951" y="70" width="5" height="6" fill="#003000"/><rect x="951" y="77" width="5" height="5" fill="#003000"/><rect x="951" y="83" width="5" height="6" fill="#003000"/><rect x="951" y="90" width="5" height="5" fill="#003000"/><rect x="951" y="96" width="5" height="6" fill="#003000"/><rect x="957" y="37" width="6" height="6" fill="#003000"/><rect x="957" y="44" width="6" height="5" fill="#003000"/><rect x="957" y="50" width="6" height="6" fill="#003000"/><rect x="957" y="57" width="6" height="5" fill="#003000"/><rect x="957" y="63" width="6" height="6" fill="#003000"/><rect x="957" y="70" width="6" height="6" fill="#003000"/><rect x="957" y="77" width="6" height="5" fill="#003000"/><rect x="957" y="83" width="6" height="6" fill="#003000"/><rect x="957" y="90" width="6" height="5" fill="#003000"/><rect x="957" y="96" width="6" height="6" fill="#003000"/><rect x="964" y="37" width="5" height="6" fill="#003000"/><rect x="964" y="44" width="5" height="5" fill="#003000"/><rect x="964" y="50" width="5" height="6" fill="#003000"/><rect x="964" y="57" width="5" height="5" fill="#003000"/><rect x="964" y="63" width="5" height="6" fill="#003000"/><rect x="964" y="70" width="5" height="6" fill="#003000"/><rect x="964" y="77" width="5" height="5" fill="#003000"/><rect x="964" y="83" width="5" height="6" fill="#003000"/><rect x="964" y="90" width="5" height="5" fill="#003000"/><rect x="964" y="96" width="5" height="6" fill="#003000"/><rect x="970" y="37" width="6" height="6" fill="#003000"/><rect x="970" y="44" width="6" height="5" fill="#003000"/><rect x="970" y="50" width="6" height="6" fill="#003000"/><rect x="970" y="57" width="6" height="5" fill="#003000"/><rect x="970" y="63" width="6" height="6" fill="#003000"/><rect x="970" y="70" width="6" height="6" fill="#003000"/><rect x="970" y="77" width="6" height="5" fill="#003000"/><rect x="970" y="83" width="6" height="6" fill="#003000"/><rect x="970" y="90" width="6" height="5" fill="#003000"/><rect x="970" y="96" width="6" height="6" fill="#003000"/><rect x="977" y="37" width="6" height="6" fill="#003000"/><rect x="977" y="44" width="6" height="5" fill="#003000"/><rect x="977" y="50" width="6" height="6" fill="#003000"/><rect x="977" y="57" width="6" height="5" fill="#003000"/><rect x="977" y="63" width="6" height="6" fill="#003000"/><rect x="977" y="70" width="6" height="6" fill="#003000"/><rect x="977" y="77" width="6" height="5" fill="#003000"/><rect x="977" y="83" width="6" height="6" fill="#003000"/><rect x="977" y="90" width="6" height="5" fill="#003000"/><rect x="977" y="96" width="6" height="6" fill="#003000"/></g><path d="M911,49 L917,49 L917,41 L924,41 L924,49 L930,49 L930,41 L937,41 L937,49 L943,49 L943,41 L950,41 L950,49 L956,49 L956,41 L963,41 L963,49 L969,49 L969,41 L976,41 L976,49 L984,49" fill="none" stroke="#ffff00" stroke-width="2" shape-rendering="crispEdges"/><path d="M911,82 L917,82 L917,74 L924,74 L924,82 L930,82 L930,74 L937,74 L937,82 L943,82 L943,74 L950,74 L950,82 L956,82 L956,74 L963,74 L963,82 L969,82 L969,74 L976,74 L976,82 L984,82" fill="none" stroke="#ff0000" stroke-width="2" shape-rendering="crispEdges"/><path d="M911.5,64.5 L917,57.8 L922.5,64.8 L928,57.8 L933,64.8 L938.5,57.8 L943.5,64.8 L949,57.8 L953.9,64.8 L959.4,57.8 L964.4,64.8 L969.9,57.8 L976,64.8 L980.9,57.8 L984,59" fill="none" stroke="#0000ff" stroke-width="2"/><path d="M911,91.95 L912,91.01 L913,90.70 L914,91.15 L915,92.20 L916,93.48 L917,94.57 L918,95.08 L919,94.86 L920,93.96 L921,92.70 L922,91.51 L923,90.80 L924,90.80 L925,91.51 L926,92.70 L927,93.96 L928,94.86 L929,95.08 L930,94.57 L931,93.48 L932,92.20 L933,91.15 L934,90.70 L935,91.01 L936,91.95 L937,93.22 L938,94.38 L939,95.04 L940,94.96 L941,94.18 L942,92.97 L943,91.73 L944,90.89 L945,90.73 L946,91.32 L947,92.45 L948,93.73 L949,94.72 L950,95.10 L951,94.72 L952,93.73 L953,92.45 L954,91.32 L955,90.73 L956,90.89 L957,91.73 L958,92.97 L959,94.18 L960,94.96 L961,95.04 L962,94.38 L963,93.22 L964,91.95 L965,91.01 L966,90.70 L967,91.15 L968,92.20 L969,93.48 L970,94.57 L971,95.08 L972,94.86 L973,93.96 L974,92.70 L975,91.51 L976,90.80 L977,90.80 L978,91.51 L979,92.70 L980,93.96 L981,94.86 L982,95.08 L983,94.57 L984,93.48" fill="none" stroke="#00ff00" stroke-width="2"/><rect x="995" y="225" width="15" height="2" fill="#800000"/><rect x="1009" y="221" width="39" height="10" fill="#c8c8a8" stroke="#800000" stroke-width="2"/><rect x="1047" y="225" width="15" height="2" fill="#800000"/><text x="1009" y="217" font-size="16" fill="#000000" stroke="#000000" stroke-width="0.25" text-anchor="start" >R3</text><text x="1009" y="243" font-size="11" fill="#000000" stroke="#000000" stroke-width="0.25" text-anchor="start" >1K</text><rect x="992" y="216" width="7" height="7" fill="#4848ff" shape-rendering="crispEdges"/><rect x="1113" y="225" width="54" height="2" fill="#800000"/><circle cx="1140.4" cy="226.4" r="15.6" fill="#000" stroke="#800000" stroke-width="2"/><rect x="1113" y="225" width="54" height="2" fill="#800000"/><path d="M1136,219 L1146,226 L1136,233 Z" fill="none" stroke="#800000" stroke-width="2"/><rect x="1145" y="219" width="2" height="15" fill="#800000"/><rect x="1163" y="229" width="6" height="7" fill="#4848ff" shape-rendering="crispEdges"/><rect x="995" y="277" width="15" height="2" fill="#800000"/><rect x="1009" y="273" width="39" height="10" fill="#c8c8a8" stroke="#800000" stroke-width="2"/><rect x="1047" y="277" width="15" height="2" fill="#800000"/><text x="1009" y="269" font-size="16" fill="#000000" stroke="#000000" stroke-width="0.25" text-anchor="start" >R4</text><text x="1009" y="295" font-size="11" fill="#000000" stroke="#000000" stroke-width="0.25" text-anchor="start" >1K</text><rect x="992" y="268" width="7" height="7" fill="#4848ff" shape-rendering="crispEdges"/><rect x="1113" y="277" width="54" height="2" fill="#800000"/><circle cx="1140.4" cy="278.4" r="15.6" fill="#000" stroke="#800000" stroke-width="2"/><rect x="1113" y="277" width="54" height="2" fill="#800000"/><path d="M1136,271 L1146,278 L1136,285 Z" fill="none" stroke="#800000" stroke-width="2"/><rect x="1145" y="271" width="2" height="15" fill="#800000"/><rect x="1163" y="281" width="6" height="7" fill="#4848ff" shape-rendering="crispEdges"/><rect x="995" y="330" width="15" height="2" fill="#800000"/><rect x="1009" y="326" width="39" height="10" fill="#c8c8a8" stroke="#800000" stroke-width="2"/><rect x="1047" y="330" width="15" height="2" fill="#800000"/><text x="1009" y="322" font-size="16" fill="#000000" stroke="#000000" stroke-width="0.25" text-anchor="start" >R5</text><text x="1009" y="348" font-size="11" fill="#000000" stroke="#000000" stroke-width="0.25" text-anchor="start" >1K</text><rect x="992" y="321" width="7" height="7" fill="#4848ff" shape-rendering="crispEdges"/><rect x="1113" y="330" width="54" height="2" fill="#800000"/><circle cx="1140.4" cy="331.4" r="15.6" fill="#000" stroke="#800000" stroke-width="2"/><rect x="1113" y="330" width="54" height="2" fill="#800000"/><path d="M1136,324 L1146,331 L1136,338 Z" fill="none" stroke="#800000" stroke-width="2"/><rect x="1145" y="324" width="2" height="15" fill="#800000"/><rect x="1163" y="334" width="6" height="7" fill="#4848ff" shape-rendering="crispEdges"/><rect x="995" y="382" width="15" height="2" fill="#800000"/><rect x="1009" y="378" width="39" height="10" fill="#c8c8a8" stroke="#800000" stroke-width="2"/><rect x="1047" y="382" width="15" height="2" fill="#800000"/><text x="1009" y="374" font-size="16" fill="#000000" stroke="#000000" stroke-width="0.25" text-anchor="start" >R6</text><text x="1009" y="400" font-size="11" fill="#000000" stroke="#000000" stroke-width="0.25" text-anchor="start" >1K</text><rect x="992" y="373" width="7" height="7" fill="#4848ff" shape-rendering="crispEdges"/><rect x="1113" y="382" width="54" height="2" fill="#800000"/><circle cx="1140.4" cy="383.4" r="15.6" fill="#000" stroke="#800000" stroke-width="2"/><rect x="1113" y="382" width="54" height="2" fill="#800000"/><path d="M1136,376 L1146,383 L1136,390 Z" fill="none" stroke="#800000" stroke-width="2"/><rect x="1145" y="376" width="2" height="15" fill="#800000"/><rect x="1163" y="386" width="6" height="7" fill="#4848ff" shape-rendering="crispEdges"/><rect x="995" y="435" width="15" height="2" fill="#800000"/><rect x="1009" y="431" width="39" height="10" fill="#c8c8a8" stroke="#800000" stroke-width="2"/><rect x="1047" y="435" width="15" height="2" fill="#800000"/><text x="1009" y="427" font-size="16" fill="#000000" stroke="#000000" stroke-width="0.25" text-anchor="start" >R7</text><text x="1009" y="453" font-size="11" fill="#000000" stroke="#000000" stroke-width="0.25" text-anchor="start" >1K</text><rect x="992" y="426" width="7" height="7" fill="#4848ff" shape-rendering="crispEdges"/><rect x="1113" y="435" width="54" height="2" fill="#800000"/><circle cx="1140.4" cy="436.4" r="15.6" fill="#000" stroke="#800000" stroke-width="2"/><rect x="1113" y="435" width="54" height="2" fill="#800000"/><path d="M1136,429 L1146,436 L1136,443 Z" fill="none" stroke="#800000" stroke-width="2"/><rect x="1145" y="429" width="2" height="15" fill="#800000"/><rect x="1163" y="439" width="6" height="7" fill="#4848ff" shape-rendering="crispEdges"/><rect x="995" y="487" width="15" height="2" fill="#800000"/><rect x="1009" y="483" width="39" height="10" fill="#c8c8a8" stroke="#800000" stroke-width="2"/><rect x="1047" y="487" width="15" height="2" fill="#800000"/><text x="1009" y="479" font-size="16" fill="#000000" stroke="#000000" stroke-width="0.25" text-anchor="start" >R8</text><text x="1009" y="505" font-size="11" fill="#000000" stroke="#000000" stroke-width="0.25" text-anchor="start" >1K</text><rect x="992" y="478" width="7" height="7" fill="#4848ff" shape-rendering="crispEdges"/><rect x="1113" y="487" width="54" height="2" fill="#800000"/><circle cx="1140.4" cy="488.4" r="15.6" fill="#000" stroke="#800000" stroke-width="2"/><rect x="1113" y="487" width="54" height="2" fill="#800000"/><path d="M1136,481 L1146,488 L1136,495 Z" fill="none" stroke="#800000" stroke-width="2"/><rect x="1145" y="481" width="2" height="15" fill="#800000"/><rect x="1163" y="491" width="6" height="7" fill="#4848ff" shape-rendering="crispEdges"/><rect x="995" y="539" width="15" height="2" fill="#800000"/><rect x="1009" y="535" width="39" height="10" fill="#c8c8a8" stroke="#800000" stroke-width="2"/><rect x="1047" y="539" width="15" height="2" fill="#800000"/><text x="1009" y="531" font-size="16" fill="#000000" stroke="#000000" stroke-width="0.25" text-anchor="start" >R9</text><text x="1009" y="557" font-size="11" fill="#000000" stroke="#000000" stroke-width="0.25" text-anchor="start" >1K</text><rect x="992" y="530" width="7" height="7" fill="#4848ff" shape-rendering="crispEdges"/><rect x="1113" y="539" width="54" height="2" fill="#800000"/><circle cx="1140.4" cy="540.4" r="15.6" fill="#000" stroke="#800000" stroke-width="2"/><rect x="1113" y="539" width="54" height="2" fill="#800000"/><path d="M1136,533 L1146,540 L1136,547 Z" fill="none" stroke="#800000" stroke-width="2"/><rect x="1145" y="533" width="2" height="15" fill="#800000"/><rect x="1163" y="543" width="6" height="7" fill="#4848ff" shape-rendering="crispEdges"/><rect x="995" y="592" width="15" height="2" fill="#800000"/><rect x="1009" y="588" width="39" height="10" fill="#c8c8a8" stroke="#800000" stroke-width="2"/><rect x="1047" y="592" width="15" height="2" fill="#800000"/><text x="1009" y="584" font-size="16" fill="#000000" stroke="#000000" stroke-width="0.25" text-anchor="start" >R10</text><text x="1009" y="610" font-size="11" fill="#000000" stroke="#000000" stroke-width="0.25" text-anchor="start" >1K</text><rect x="992" y="583" width="7" height="7" fill="#4848ff" shape-rendering="crispEdges"/><rect x="1113" y="592" width="54" height="2" fill="#800000"/><circle cx="1140.4" cy="593.4" r="15.6" fill="#000" stroke="#800000" stroke-width="2"/><rect x="1113" y="592" width="54" height="2" fill="#800000"/><path d="M1136,586 L1146,593 L1136,600 Z" fill="none" stroke="#800000" stroke-width="2"/><rect x="1145" y="586" width="2" height="15" fill="#800000"/><rect x="1163" y="596" width="6" height="7" fill="#4848ff" shape-rendering="crispEdges"/><rect x="995" y="644" width="15" height="2" fill="#800000"/><rect x="1009" y="640" width="39" height="10" fill="#c8c8a8" stroke="#800000" stroke-width="2"/><rect x="1047" y="644" width="15" height="2" fill="#800000"/><text x="1009" y="636" font-size="16" fill="#000000" stroke="#000000" stroke-width="0.25" text-anchor="start" >R11</text><text x="1009" y="662" font-size="11" fill="#000000" stroke="#000000" stroke-width="0.25" text-anchor="start" >1K</text><rect x="992" y="635" width="7" height="7" fill="#ff4848" shape-rendering="crispEdges"/><rect x="1113" y="644" width="54" height="2" fill="#800000"/><circle cx="1140.4" cy="645.4" r="15.6" fill="#003200" stroke="#800000" stroke-width="2"/><rect x="1113" y="644" width="54" height="2" fill="#800000"/><path d="M1136,638 L1146,645 L1136,652 Z" fill="#007000" stroke="#800000" stroke-width="2"/><rect x="1145" y="638" width="2" height="15" fill="#800000"/><rect x="1163" y="648" width="6" height="7" fill="#4848ff" shape-rendering="crispEdges"/><rect x="995" y="697" width="15" height="2" fill="#800000"/><rect x="1009" y="693" width="39" height="10" fill="#c8c8a8" stroke="#800000" stroke-width="2"/><rect x="1047" y="697" width="15" height="2" fill="#800000"/><text x="1009" y="689" font-size="16" fill="#000000" stroke="#000000" stroke-width="0.25" text-anchor="start" >R12</text><text x="1009" y="715" font-size="11" fill="#000000" stroke="#000000" stroke-width="0.25" text-anchor="start" >1K</text><rect x="992" y="688" width="7" height="7" fill="#4848ff" shape-rendering="crispEdges"/><rect x="1113" y="697" width="54" height="2" fill="#800000"/><circle cx="1140.4" cy="698.4" r="15.6" fill="#000" stroke="#800000" stroke-width="2"/><rect x="1113" y="697" width="54" height="2" fill="#800000"/><path d="M1136,691 L1146,698 L1136,705 Z" fill="none" stroke="#800000" stroke-width="2"/><rect x="1145" y="691" width="2" height="15" fill="#800000"/><rect x="1163" y="701" width="6" height="7" fill="#4848ff" shape-rendering="crispEdges"/><text x="1124" y="205.5" font-size="16" fill="#000000" stroke="#000000" stroke-width="0.25" text-anchor="start" >D1</text><text x="1123.5" y="254" font-size="11" fill="#000000" stroke="#000000" stroke-width="0.25" text-anchor="start" letter-spacing="-0.2">LED-GREEN</text><text x="1124" y="257.5" font-size="16" fill="#000000" stroke="#000000" stroke-width="0.25" text-anchor="start" >D2</text><text x="1123.5" y="306" font-size="11" fill="#000000" stroke="#000000" stroke-width="0.25" text-anchor="start" letter-spacing="-0.2">LED-GREEN</text><text x="1124" y="310.5" font-size="16" fill="#000000" stroke="#000000" stroke-width="0.25" text-anchor="start" >D3</text><text x="1123.5" y="359" font-size="11" fill="#000000" stroke="#000000" stroke-width="0.25" text-anchor="start" letter-spacing="-0.2">LED-GREEN</text><text x="1124" y="362.5" font-size="16" fill="#000000" stroke="#000000" stroke-width="0.25" text-anchor="start" >D4</text><text x="1123.5" y="411" font-size="11" fill="#000000" stroke="#000000" stroke-width="0.25" text-anchor="start" letter-spacing="-0.2">LED-GREEN</text><text x="1124" y="415.5" font-size="16" fill="#000000" stroke="#000000" stroke-width="0.25" text-anchor="start" >D5</text><text x="1123.5" y="464" font-size="11" fill="#000000" stroke="#000000" stroke-width="0.25" text-anchor="start" letter-spacing="-0.2">LED-GREEN</text><text x="1124" y="467.5" font-size="16" fill="#000000" stroke="#000000" stroke-width="0.25" text-anchor="start" >D6</text><text x="1123.5" y="516" font-size="11" fill="#000000" stroke="#000000" stroke-width="0.25" text-anchor="start" letter-spacing="-0.2">LED-GREEN</text><text x="1124" y="519.5" font-size="16" fill="#000000" stroke="#000000" stroke-width="0.25" text-anchor="start" >D7</text><text x="1123.5" y="568" font-size="11" fill="#000000" stroke="#000000" stroke-width="0.25" text-anchor="start" letter-spacing="-0.2">LED-GREEN</text><text x="1124" y="572.5" font-size="16" fill="#000000" stroke="#000000" stroke-width="0.25" text-anchor="start" >D8</text><text x="1123.5" y="621" font-size="11" fill="#000000" stroke="#000000" stroke-width="0.25" text-anchor="start" letter-spacing="-0.2">LED-GREEN</text><text x="1124" y="624.5" font-size="16" fill="#000000" stroke="#000000" stroke-width="0.25" text-anchor="start" >D9</text><text x="1123.5" y="673" font-size="11" fill="#000000" stroke="#000000" stroke-width="0.25" text-anchor="start" letter-spacing="-0.2">LED-GREEN</text><text x="1124" y="677.5" font-size="16" fill="#000000" stroke="#000000" stroke-width="0.25" text-anchor="start" >D10</text><text x="1123.5" y="726" font-size="11" fill="#000000" stroke="#000000" stroke-width="0.25" text-anchor="start" letter-spacing="-0.2">LED-GREEN</text><rect x="341" y="554" width="72" height="12" fill="#dfdfcf" shape-rendering="crispEdges"/><path d="M315,567 L325.0,557.7" stroke="#0c0cc8" stroke-width="1.1"/><path d="M321.4,554.8 L334.7,547.3 L328.6,560.6 Z" fill="none" stroke="#0c0cc8" stroke-width="1.1"/><text x="342" y="550.5" font-size="11" font-weight="bold" fill="#1c1cd0" letter-spacing="-0.15">RV1(1)</text><text x="342" y="565" font-size="11" fill="#000000" stroke="#000000" stroke-width="0.25" text-anchor="start" letter-spacing="-0.25">V=1.64091</text><rect x="392.5" y="557.5" width="1.2" height="7.5" fill="#000"/><rect x="760" y="370" width="53" height="11" fill="#dfdfcf" shape-rendering="crispEdges"/><path d="M737.4,380.4 L744.0,374.0" stroke="#0c0cc8" stroke-width="1.1"/><path d="M740.4,370.4 L753.9,364.3 L747.6,377.6 Z" fill="none" stroke="#0c0cc8" stroke-width="1.1"/><text x="760.5" y="367.9" font-size="11" font-weight="bold" fill="#1c1cd0" letter-spacing="-0.15">U2(CLK)</text><text x="760.5" y="380.5" font-size="11" fill="#000000" stroke="#000000" stroke-width="0.25" text-anchor="start" letter-spacing="0">V=0</text><rect x="775" y="374" width="5" height="5" fill="#4848ff" shape-rendering="crispEdges"/><rect x="917" y="213" width="53" height="12" fill="#dfdfcf" shape-rendering="crispEdges"/><path d="M894.5,222.5 L900.8499999999999,216.95" stroke="#0c0cc8" stroke-width="1.1"/><path d="M897.4,213.3 L911.9,206.4 L904.3,220.6 Z" fill="none" stroke="#0c0cc8" stroke-width="1.1"/><text x="917.5" y="210" font-size="11" font-weight="bold" fill="#1c1cd0" letter-spacing="-0.15">R3(1)</text><text x="917.5" y="224" font-size="11" fill="#000000" stroke="#000000" stroke-width="0.25" text-anchor="start" letter-spacing="0">V=0</text></g></svg></body></html>
